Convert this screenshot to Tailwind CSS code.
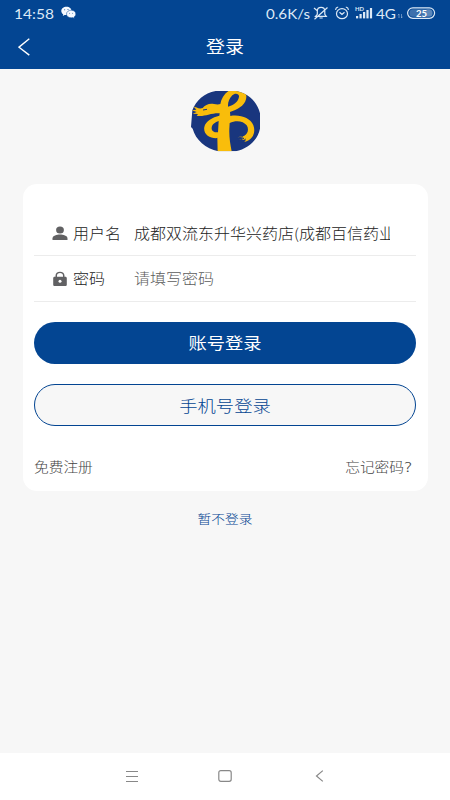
<!DOCTYPE html>
<html lang="zh-CN">
<head>
<meta charset="utf-8">
<meta name="viewport" content="width=device-width, initial-scale=1">
<title>登录</title>
<script src="https://cdn.jsdelivr.net/npm/@tailwindcss/browser@4"></script>
</head>
<body class="bg-[#f7f7f7] font-['Noto_Sans_CJK_SC',sans-serif]">
<div class="w-[450px] h-[800px] flex flex-col overflow-hidden">
  <header class="h-[69px] shrink-0 bg-[#034592] text-white flex flex-col">
    <div class="h-[25px] flex items-center justify-between pl-[14px] pr-[14px] text-[#dde9f6]">
      <div class="flex items-center gap-[7px]">
        <svg class="w-10 h-[18px]" viewBox="0 0 40 18"><text x="0" y="14.500" font-family="Lato" font-size="14" textLength="40" lengthAdjust="spacingAndGlyphs" fill="currentColor">14:58</text></svg>
        <svg class="w-[15px] h-[13px]" viewBox="0 0 15 13"><path fill="#f5f9ff" d="M5.500 .8C2.500.8.3 2.600.3 5c0 1.400.7 2.500 1.900 3.300L1.800 9.900l1.800-1c.6.200 1.200.2 1.900.2C8.400 9 10.500 7.300 10.500 5S8.400.8 5.500.8Z"/><path fill="#f5f9ff" stroke="#034592" stroke-width=".5" d="M10.200 4.200c-2.700 0-4.700 1.700-4.700 3.800s2 3.800 4.700 3.800c.6 0 1.100-.1 1.600-.2l1.500.9-.3-1.500c1.100-.7 1.800-1.700 1.800-3 0-2.100-1.900-3.800-4.600-3.800Z"/><g fill="#034592"><circle cx="3.700" cy="3.800" r=".5"/><circle cx="7" cy="3.600" r=".5"/><circle cx="8.700" cy="7.200" r=".45"/><circle cx="11.700" cy="7.200" r=".45"/></g></svg>
      </div>
      <svg class="w-[170px] h-[24px]" viewBox="266 0 170 24" fill="none" stroke="currentColor" stroke-width="1.200">
        <g fill="currentColor" stroke="none" font-family="Lato">
          <text x="266" y="17.500" font-size="13.500" textLength="44" lengthAdjust="spacingAndGlyphs">0.6K/s</text>
          <text x="376" y="17.500" font-size="13.500" textLength="20" lengthAdjust="spacingAndGlyphs">4G</text>
          <text x="355" y="10" font-size="6" font-weight="bold" textLength="9" lengthAdjust="spacingAndGlyphs">HD</text>
        </g>
        <path d="M315.500 15.300h10.800l-1.500-2V10c0-2.300-1.500-3.700-3.700-3.700s-3.800 1.400-3.800 3.700v3.300ZM319.500 17h3.200M314.500 18.200 327.500 6.500M314 7l3 2.500"/>
        <ellipse cx="342" cy="12.700" rx="5.500" ry="5"/><path d="M339.500 11.300l2.500 2.200 2.500-2.200M335.500 8.800c.2-1.500 1.200-2.500 2.700-2.800M348.500 8.800c-.2-1.500-1.200-2.500-2.700-2.800"/>
        <g fill="currentColor" stroke="none"><rect x="356" y="15" width="2.200" height="2.400"/><rect x="359.500" y="13" width="2.200" height="4.400"/><rect x="363" y="11" width="2.200" height="6.400"/><rect x="366.400" y="9" width="2.200" height="8.400"/><rect x="369.900" y="7" width="2.200" height="10.400"/></g>
        <path stroke-width=".8" opacity=".55" d="M399 17v-4l-1 1.300M401.500 13v4l1-1.300"/>
        <rect x="407.600" y="6.800" width="27" height="10.500" rx="5.250" stroke-width="1.200"/>
        <rect x="409.500" y="8.300" width="18" height="7.500" rx="3.500" fill="#3e71ad" stroke="none"/>
        <rect x="424" y="8.300" width="8.500" height="7.500" rx="3.500" fill="#5b87ba" stroke="none"/>
        <text x="416" y="15.500" font-family="Lato" font-weight="bold" font-size="9" textLength="11" lengthAdjust="spacingAndGlyphs" fill="#fff" stroke="none">25</text>
      </svg>
    </div>
    <div class="h-11 grid grid-cols-[60px_1fr_60px] items-center">
      <svg class="ml-[18px] w-3 h-[18px]" viewBox="0 0 12 18" fill="none" stroke="#fff" stroke-width="1.400"><path d="M11.300 .8 1 9.200l10.300 7.900"/></svg>
      <h1 class="-mt-[2px] text-center text-[19px] leading-6 scale-y-[.87]">登录</h1>
    </div>
  </header>
  <main class="flex-1 flex flex-col items-center">
    <svg class="mt-[19px] ml-[2px] w-[76px] h-[68px]" viewBox="0 0 228 204">
      <defs><clipPath id="disc"><path d="M83 9C48 16 24 37 13 67l-4 50 5 5c9 34 39 59 77 68h52c38-8 66-34 73-68V76C208 42 181 15 144 9Z"/></clipPath></defs>
      <g clip-path="url(#disc)">
        <path fill="#19367e" d="M0 0h228v204H0z"/>
        <g fill="#f9bd0b">
          <path fill-rule="evenodd" d="M128 5c-17 9-28 25-31 43-6 2-13 1-19 0-13-3-27 2-34 12-10 4-20-2-28-5l9 10-14 2 15 5-12 5 16 1-4 5c13 3 24-1 35-3 13-3 24-5 34-4l-1 7c-20 5-41 15-45 34-4 20 14 34 35 34l4-2 1 46h43c-5-25-9-48-8-72l1-18c19-10 42-6 51 7 8 12 3 25-8 32l-20 4 20 1-14 7 20-1-5 7c26-6 35-30 27-50-9-22-39-33-69-28l-1-12c21-6 43-18 48-38 4-17-4-27-17-33ZM133 22c7-8 21-6 20 4-2 15-16 25-33 30-1-13 4-25 13-34ZM92 99l-2 34c-12 1-20-5-19-14 1-10 11-17 21-20Z"/>
        </g>
        <path fill="none" stroke="#19367e" stroke-width="3" d="M147 151l18-5M152 158l16-7M164 161l9-8M45 66l12-2"/>
      </g>
    </svg>
    <section class="mt-7 w-[405px] h-[307px] rounded-[14px] bg-white px-[11.5px] pt-[25px] flex flex-col">
      <label class="h-[47px] border-b border-[#ececec] flex items-center pl-[18px] pr-[26px] text-base text-[#222]">
        <svg class="mt-[2px] mr-[5px] w-4 h-[15px] shrink-0" viewBox="0 0 16 15" fill="#616163"><ellipse cx="8" cy="3.900" rx="3.900" ry="3.500"/><path d="M.5 14v-1.600C.5 9.800 4.800 8.600 8 8.600s7.500 1.200 7.500 3.800V14Z"/></svg>
        <span class="mt-[1px] w-[61px] shrink-0 scale-y-90 font-light">用户名</span>
        <span class="mt-[1px] flex-1 overflow-hidden whitespace-nowrap scale-y-90 font-light">成都双流东升华兴药店(成都百信药业</span>
      </label>
      <label class="h-[46px] border-b border-[#ececec] flex items-center pl-[18px] text-base text-[#222]">
        <svg class="mr-[5px] w-4 h-4 shrink-0" viewBox="0 0 16 16"><path fill="#616163" fill-rule="evenodd" d="M3.500 5.800V4.700C3.500 2.300 5.300.7 8 .7s4.500 1.600 4.500 4v1.100h.8c.9 0 1.500.6 1.500 1.400v6.500c0 .8-.6 1.400-1.500 1.400H2.700c-.9 0-1.500-.6-1.500-1.400V7.200c0-.8.6-1.400 1.500-1.400ZM5 5.800h6V4.700C11 3 9.900 2 8 2S5 3 5 4.700Z"/><circle cx="8" cy="10.300" r="1.500" fill="#fff"/></svg>
        <span class="-mt-px w-[61px] shrink-0 scale-y-90 font-light">密码</span>
        <span class="-mt-px scale-y-90 font-light text-[#5c5c5c]">请填写密码</span>
      </label>
      <button class="mt-5 h-[41.5px] pb-[2px] shrink-0 rounded-full bg-[#034592] text-white text-[18.3px] leading-6"><span class="block scale-y-[.88]">账号登录</span></button>
      <button class="mt-[20.5px] h-[42px] pb-px shrink-0 rounded-full border border-[#034592] bg-[#f7f7f7] text-[#034592] text-[18.3px] leading-6"><span class="block scale-y-[.88] font-light">手机号登录</span></button>
      <div class="mt-[29px] flex justify-between pr-[3px] text-[14.7px] leading-6 text-[#444] font-light"><span class="scale-y-90">免费注册</span><span class="scale-y-90">忘记密码<span class="inline-block origin-left w-[9px] scale-x-120">?</span></span></div>
    </section>
    <a class="mt-[18px] text-[13.7px] leading-5 text-[#034592] scale-y-90 font-light">暂不登录</a>
  </main>
  <nav class="h-[47px] shrink-0 bg-white flex items-center justify-between pl-[125px] pr-[126px] pb-[2px] text-[#888]">
    <svg class="w-[14px] h-3" viewBox="0 0 14 12" stroke="currentColor" stroke-width="1"><path d="M1 1.500h12M1 6.500h12M1 11.500h12"/></svg>
    <svg class="-ml-[4px] w-[14px] h-3" viewBox="0 0 14 12" fill="none" stroke="currentColor" stroke-width="1.200"><rect x=".8" y=".7" width="12.400" height="10.600" rx="2"/></svg>
    <svg class="w-[9px] h-3" viewBox="0 0 9 12" fill="none" stroke="currentColor" stroke-width="1.200"><path d="M7.800 .6 1.500 6l6.300 5.400"/></svg>
  </nav>
</div>
</body>
</html>
